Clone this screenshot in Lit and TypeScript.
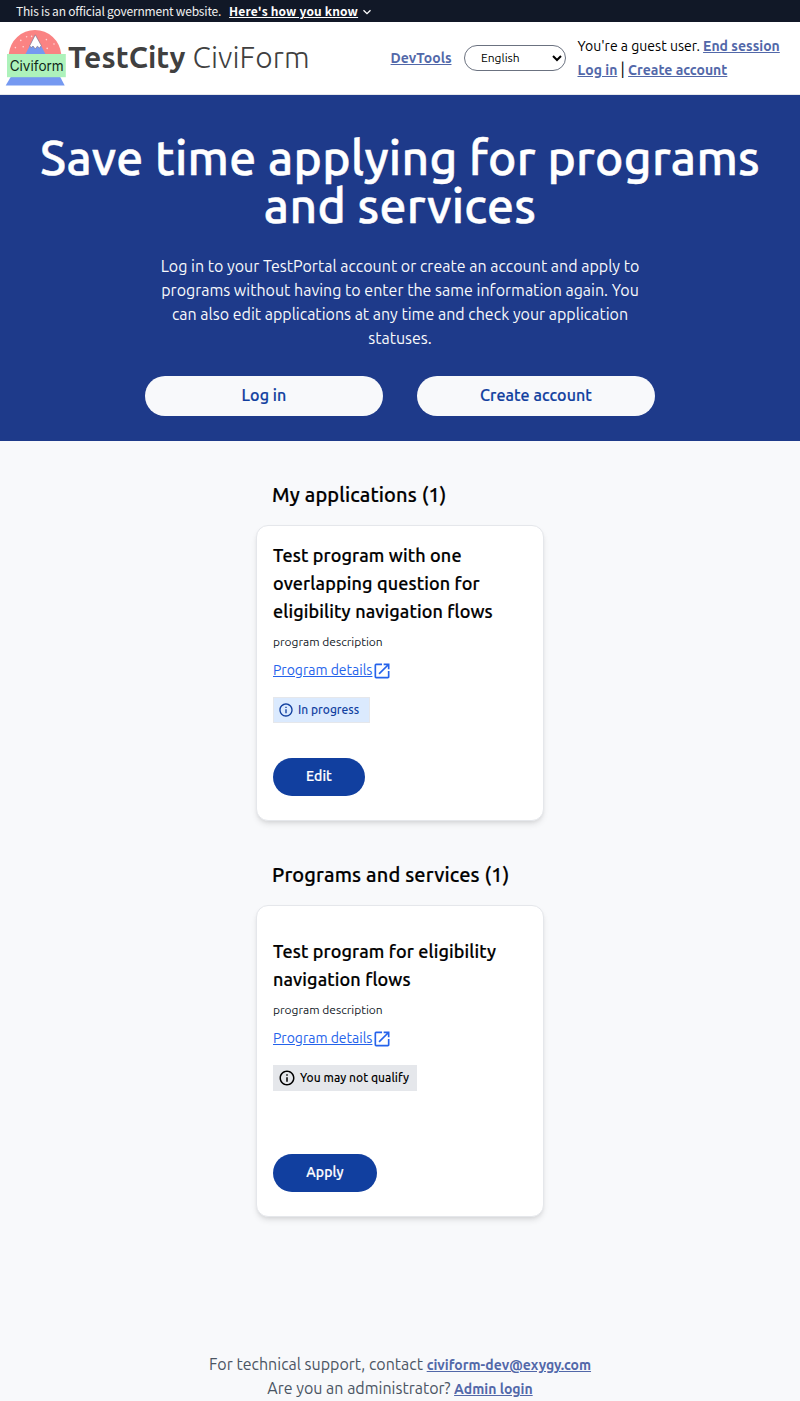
import { LitElement, html, svg, css } from "lit";
import { customElement, property } from "lit/decorators.js";

const INFO_PATH =
  "M11 7h2v2h-2zm0 4h2v6h-2zm1-9C6.48 2 2 6.48 2 12s4.48 10 10 10 10-4.48 10-10S17.52 2 12 2zm0 18c-4.41 0-8-3.59-8-8s3.59-8 8-8 8 3.59 8 8-3.59 8-8 8z";
const OPEN_PATH =
  "M19 19H5V5h7V3H5a2 2 0 0 0-2 2v14a2 2 0 0 0 2 2h14c1.1 0 2-.9 2-2v-7h-2v7zM14 3v2h3.59l-9.83 9.83 1.41 1.41L19 6.41V10h2V3h-7z";

@customElement("city-logo")
class CityLogo extends LitElement {
  static styles = css`
    :host { display: block; width: 60px; height: 56px; }
    svg { display: block; overflow: visible; }
    text { font: 14px Inter, "Liberation Sans", sans-serif; fill: #10281a; }
  `;
  render() {
    const snow = [[20.6, 6.8], [14.8, 10.4], [25.6, 6.4], [9.4, 17.6], [17.2, 16.8], [40.4, 9.6], [48, 14], [41.2, 18.4]];
    return html`<svg width="60" height="56" viewBox="0 0 60 56" role="img" aria-label="Civiform logo">
      <path d="M2.8 25v-1a26.3 26.3 0 0 1 52.4 0v1z" fill="#fa8383" />
      <path d="M19 25 29.3 5 40 25z" fill="#7599f1" />
      <path d="M29.3 4.8 23.8 15.6l1.2 2.2 2-1.8 2.3 3 2-2.8 2.2 1.8 1.8-2.4z" fill="#fff" stroke="#7a6a80" stroke-width=".6" />
      ${snow.map(([x, y]) => svg`<circle cx=${x} cy=${y} r=".8" fill="#ffd5d5" />`)}
      <path d="M5 46.5h49l4.7 9H-.3z" fill="#7599f1" />
      <rect x="1" y="24" width="58.8" height="23.2" fill="#adf2bb" />
      <text x="3.7" y="41.2" textLength="54" lengthAdjust="spacingAndGlyphs">Civiform</text>
    </svg>`;
  }
}

@customElement("program-card")
class ProgramCard extends LitElement {
  @property() heading = "";
  @property() status = "";
  @property() action = "";
  @property() tone = "progress";

  static styles = css`
    :host { display: block; }
    .card { box-sizing: border-box; width: 288px; display: flex; flex-direction: column; align-items: flex-start; background: #fff; border: 1px solid #e5e7eb; border-radius: 12px; padding: 15px 16px 24px; box-shadow: 0 4px 6px -1px rgba(0,0,0,.1), 0 2px 4px -2px rgba(0,0,0,.1); }
    .card.eligibility { padding-top: 31px; }
    h3 { margin: 0; font-size: 18px; line-height: 28px; font-weight: 500; letter-spacing: .13px; -webkit-text-stroke: .2px currentColor; color: #000; }
    .desc { margin: 9px 0 10px; font-size: 12px; line-height: 16px; color: #111827; }
    .details { display: flex; align-items: flex-start; height: 20px; font-size: 14px; line-height: 20px; color: #2563eb; text-decoration: underline; }
    .details svg { margin: 1px 0 0; flex: none; }
    .tag { box-sizing: border-box; height: 26px; margin-top: 17px; display: flex; align-items: center; gap: 4px; border: 1px solid #e5e7eb; font-size: 12px; line-height: 16px; font-weight: 500; white-space: nowrap; }
    .tag span { padding-bottom: 1px; }
    .progress .tag { background: #dbeafe; color: #113f9f; padding: 0 10px 0 4px; }
    .eligibility .tag { background: #e5e7eb; color: #000; padding: 0 7px 0 4px; letter-spacing: .03px; }
    button { margin: 35px 0 0; height: 38px; border: 0; border-radius: 19px; padding: 0 33px 2px; background: #113f9f; color: #fff; font: 500 14px/20px Ubuntu, "Open Sans", sans-serif; letter-spacing: .1px; -webkit-text-stroke: .2px currentColor; }
    .eligibility button { margin-top: 63px; width: 104px; }
  `;
  render() {
    const size = this.tone === "progress" ? 16 : 18;
    return html`<article class="card ${this.tone}">
      <h3>${this.heading}</h3>
      <div class="desc">program description</div>
      <a class="details"><span>Program details</span>
        <svg width="20" height="20" viewBox="0 0 24 24" fill="#2563eb"><path d=${OPEN_PATH} /></svg></a>
      <div class="tag">
        <svg width=${size} height=${size} viewBox="0 0 24 24" fill="currentColor"><path d=${INFO_PATH} /></svg>
        <span>${this.status}</span>
      </div>
      <button>${this.action}</button>
    </article>`;
  }
}

@customElement("app-root")
class AppRoot extends LitElement {
  static styles = css`
    :host { display: block; box-sizing: border-box; width: 800px; height: 1401px; overflow: hidden; background: #f8f9fb; color: #000; font-family: Ubuntu, "Open Sans", sans-serif; }
    .banner { height: 22px; box-sizing: border-box; padding-left: 16px; display: flex; align-items: center; background: #111827; color: #f0f0f0; font: 12px/22px "Noto Sans CJK SC", "Open Sans", sans-serif; white-space: nowrap; }
    .gov { letter-spacing: -.2px; }
    .banner b { margin-left: 8px; color: #fff; text-decoration: underline; letter-spacing: .16px; }
    .banner svg { margin-left: 4px; margin-top: 2px; }
    header { box-sizing: border-box; height: 73px; border-bottom: 1px solid #e5e7eb; background: #fff; display: flex; align-items: center; padding: 0 19.5px 0 6px; }
    h1 { margin: 0 0 0 2px; padding-bottom: 2px; font-size: 30px; line-height: 36px; font-weight: 300; letter-spacing: .09px; color: #404040; white-space: nowrap; flex: 1; }
    h1 b { font-weight: 700; }
    .link { color: #5268a9; font-weight: 600; font-size: 14px; line-height: 1; text-decoration: underline; }
    select { box-sizing: border-box; width: 102px; height: 26px; margin: 0 11.5px 0 12.5px; padding: 0 0 1px 12px; border: 1px solid #6b7280; border-radius: 13px; background: #fff; color: #000; font: 12px Ubuntu, "Open Sans", sans-serif; }
    .user { width: 203px; font-size: 14px; line-height: 24px; letter-spacing: .01px; white-space: nowrap; }
    .bar { font-size: 16px; line-height: 1; }
    .hero { box-sizing: border-box; height: 346px; padding-top: 38px; background: #1e3a8a; color: #f8f9fb; display: flex; flex-direction: column; align-items: center; text-align: center; }
    .hero h2 { margin: 0; font-size: 48px; line-height: 48px; font-weight: 500; letter-spacing: .28px; -webkit-text-stroke: .5px currentColor; color: #fff; width: 760px; }
    .hero p { margin: 25px 0 26px; width: 488px; font-size: 16px; line-height: 24px; }
    .actions { display: flex; gap: 34px; }
    .actions button { width: 238px; height: 40px; border: 0; border-radius: 20px; padding: 0 0 2px; background: #f8f9fb; color: #113f9f; font: 500 16px/24px Ubuntu, "Open Sans", sans-serif; letter-spacing: .1px; -webkit-text-stroke: .2px currentColor; }
    main { display: flex; flex-direction: column; width: 288px; margin: 0 auto; padding-top: 40px; }
    section { display: flex; flex-direction: column; gap: 16px; margin-bottom: 40px; }
    section h2 { margin: 0; padding-left: 16px; font-size: 20px; line-height: 28px; font-weight: 500; letter-spacing: .14px; -webkit-text-stroke: .2px currentColor; white-space: nowrap; }
    footer { padding-top: 95px; text-align: center; font-size: 16px; line-height: 24px; color: #4b5563; }
  `;
  render() {
    return html`
      <div class="banner"><span class="gov">This is an official government website.</span><b>Here's how you know</b>
        <svg width="10" height="8" viewBox="0 0 10 8" fill="none" stroke="#fff" stroke-width="1.3"><path d="M1.5 2.2 5 5.7l3.5-3.5" /></svg></div>
      <header>
        <city-logo></city-logo>
        <h1><b>TestCity</b> CiviForm</h1>
        <a class="link">DevTools</a>
        <select aria-label="Language"><option>English</option></select>
        <div class="user">
          <div>You're a guest user. <a class="link">End session</a></div>
          <div><a class="link">Log in</a> <span class="bar">|</span> <a class="link">Create account</a></div>
        </div>
      </header>
      <div class="hero">
        <h2>Save time applying for programs and services</h2>
        <p>Log in to your TestPortal account or create an account and apply to programs without having to enter the same information again. You can also edit applications at any time and check your application statuses.</p>
        <div class="actions"><button>Log in</button><button>Create account</button></div>
      </div>
      <main>
        <section>
          <h2>My applications (1)</h2>
          <program-card heading="Test program with one overlapping question for eligibility navigation flows" status="In progress" action="Edit" tone="progress"></program-card>
        </section>
        <section>
          <h2>Programs and services (1)</h2>
          <program-card heading="Test program for eligibility navigation flows" status="You may not qualify" action="Apply" tone="eligibility"></program-card>
        </section>
      </main>
      <footer>
        <div>For technical support, contact <a class="link">civiform-dev@exygy.com</a></div>
        <div>Are you an administrator? <a class="link">Admin login</a></div>
      </footer>`;
  }
}
